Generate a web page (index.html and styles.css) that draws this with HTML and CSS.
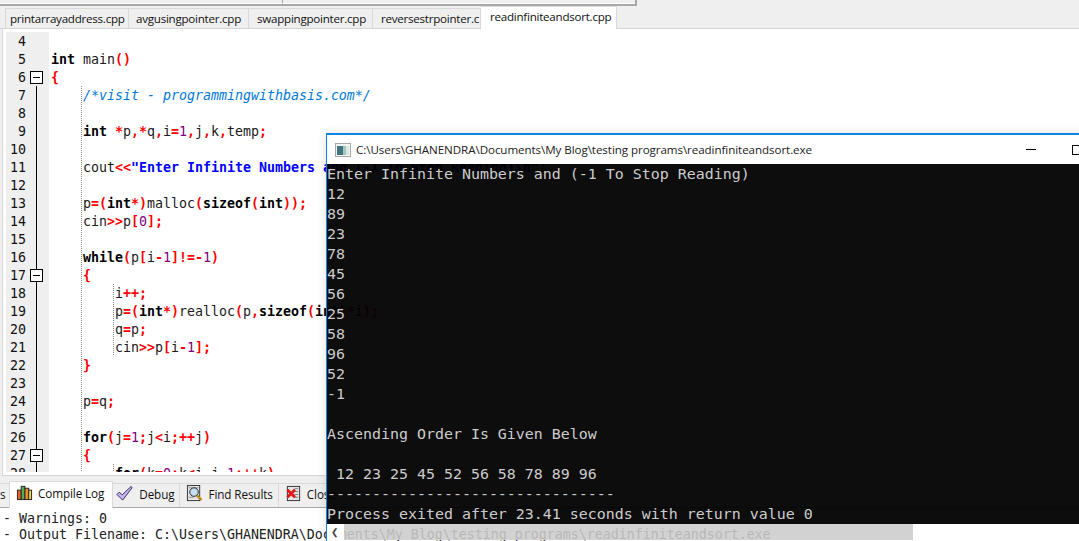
FILE: index.html
```html
<!DOCTYPE html>
<html lang="en">
<head>
<meta charset="utf-8">
<title>readinfiniteandsort</title>
<link rel="stylesheet" href="styles.css">
</head>
<body>
<div class="ide">
  <div class="menu-strip"><span class="menu-left"></span><span class="menu-right"></span></div>
  <div class="tabs">
    <span class="tab">printarrayaddress.cpp</span>
    <span class="tab">avgusingpointer.cpp</span>
    <span class="tab">swappingpointer.cpp</span>
    <span class="tab">reversestrpointer.c</span>
    <span class="tab tab-active">readinfiniteandsort.cpp</span>
  </div>
  <div class="editor">
    <div class="gutter">
      <div class="ln"><span class="num">4</span></div>
      <div class="ln"><span class="num">5</span></div>
      <div class="ln"><span class="num">6</span><i class="fold"></i></div>
      <div class="ln"><span class="num">7</span><i class="bar"></i></div>
      <div class="ln"><span class="num">8</span><i class="bar"></i></div>
      <div class="ln"><span class="num">9</span><i class="bar"></i></div>
      <div class="ln"><span class="num">10</span><i class="bar"></i></div>
      <div class="ln"><span class="num">11</span><i class="bar"></i></div>
      <div class="ln"><span class="num">12</span><i class="bar"></i></div>
      <div class="ln"><span class="num">13</span><i class="bar"></i></div>
      <div class="ln"><span class="num">14</span><i class="bar"></i></div>
      <div class="ln"><span class="num">15</span><i class="bar"></i></div>
      <div class="ln"><span class="num">16</span><i class="bar"></i></div>
      <div class="ln"><span class="num">17</span><i class="bar"></i><i class="fold"></i></div>
      <div class="ln"><span class="num">18</span><i class="bar"></i></div>
      <div class="ln"><span class="num">19</span><i class="bar"></i></div>
      <div class="ln"><span class="num">20</span><i class="bar"></i></div>
      <div class="ln"><span class="num">21</span><i class="bar"></i></div>
      <div class="ln"><span class="num">22</span><i class="bar"></i></div>
      <div class="ln"><span class="num">23</span><i class="bar"></i></div>
      <div class="ln"><span class="num">24</span><i class="bar"></i></div>
      <div class="ln"><span class="num">25</span><i class="bar"></i></div>
      <div class="ln"><span class="num">26</span><i class="bar"></i></div>
      <div class="ln"><span class="num">27</span><i class="bar"></i><i class="fold"></i></div>
      <div class="ln"><span class="num">28</span><i class="bar"></i></div>
    </div>
    <div class="code">
      <div class="cl"></div>
      <div class="cl"><b>int</b> main<u>()</u></div>
      <div class="cl"><u>{</u></div>
      <div class="cl in1"><em>/*visit - programmingwithbasis.com*/</em></div>
      <div class="cl in1"></div>
      <div class="cl in1"><b>int</b> <u>*</u>p<u>,*</u>q<u>,</u>i<u>=</u><s>1</s><u>,</u>j<u>,</u>k<u>,</u>temp<u>;</u></div>
      <div class="cl in1"></div>
      <div class="cl in1">cout<u>&lt;&lt;</u><strong>"Enter Infinite Numbers and (-1 To Stop Reading)\n"</strong><u>;</u></div>
      <div class="cl in1"></div>
      <div class="cl in1">p<u>=(</u><b>int</b><u>*)</u>malloc<u>(</u><b>sizeof</b><u>(</u><b>int</b><u>));</u></div>
      <div class="cl in1">cin<u>&gt;&gt;</u>p<u>[</u><s>0</s><u>];</u></div>
      <div class="cl in1"></div>
      <div class="cl in1"><b>while</b><u>(</u>p<u>[</u>i<u>-</u><s>1</s><u>]!=-</u><s>1</s><u>)</u></div>
      <div class="cl in1"><u>{</u></div>
      <div class="cl in1 in2">i<u>++;</u></div>
      <div class="cl in1 in2">p<u>=(</u><b>int</b><u>*)</u>realloc<u>(</u>p<u>,</u><b>sizeof</b><u>(</u><b>int</b><u>)*</u>i<u>);</u></div>
      <div class="cl in1 in2">q<u>=</u>p<u>;</u></div>
      <div class="cl in1 in2">cin<u>&gt;&gt;</u>p<u>[</u>i<u>-</u><s>1</s><u>];</u></div>
      <div class="cl in1"><u>}</u></div>
      <div class="cl in1"></div>
      <div class="cl in1">p<u>=</u>q<u>;</u></div>
      <div class="cl in1"></div>
      <div class="cl in1"><b>for</b><u>(</u>j<u>=</u><s>1</s><u>;</u>j<u>&lt;</u>i<u>;++</u>j<u>)</u></div>
      <div class="cl in1"><u>{</u></div>
      <div class="cl in1 in2"><b>for</b><u>(</u>k<u>=</u><s>0</s><u>;</u>k<u>&lt;</u>i<u>-</u>j<u>-</u><s>1</s><u>;++</u>k<u>)</u></div>
    </div>
  </div>
  <div class="dock-tabs">
    <span class="dock dock-cut">s</span>
    <span class="dock dock-active">
      <svg class="ico" viewBox="0 0 18 18"><rect x="1.5" y="6.5" width="4" height="10" fill="#e8602a" stroke="#222"/><rect x="5.5" y="2.5" width="4" height="14" fill="#4fae4f" stroke="#222"/><rect x="9.5" y="4.5" width="4" height="12" fill="#f08a2c" stroke="#222"/><rect x="13.5" y="6.5" width="3" height="10" fill="#f6dc4a" stroke="#222"/></svg>
      Compile Log</span>
    <span class="dock dock-debug">
      <svg class="ico" viewBox="0 0 18 18"><path d="M1 10l2.500-2.500 3 3L16 1.500l1 1.500L7 16z" fill="#c6b4ee" stroke="#33275f" stroke-linejoin="round"/></svg>
      Debug</span>
    <span class="dock">
      <svg class="ico" viewBox="0 0 18 18"><rect x="1.500" y="0.500" width="13" height="16" fill="#e4e4e4" stroke="#333"/><path d="M3 3h10M3 13h5" stroke="#888"/><circle cx="8.500" cy="7.500" r="4.500" fill="#c4def2" stroke="#222"/><path d="M11.500 11l5 5" stroke="#b98a1a" stroke-width="2.500"/></svg>
      Find Results</span>
    <span class="dock">
      <svg class="ico" viewBox="0 0 18 18"><rect x="2.500" y="1.500" width="13" height="15" fill="#e4e4e4" stroke="#333"/><path d="M10 4h4M10 7h4M10 10h4M10 13h4" stroke="#777"/><path d="M1.500 4l8 8M9.500 4l-8 8" stroke="#e01818" stroke-width="3" transform="translate(1 1)"/></svg>
      Close</span>
  </div>
  <div class="log">
    <div class="log-line">- Warnings: 0</div>
    <div class="log-line">- Output Filename: C:\Users\GHANENDRA\Documents\My Blog\testing programs\readinfiniteandsort.exe</div>
  </div>
</div>

<section class="console">
  <header class="titlebar">
    <svg class="app-ico" viewBox="0 0 16 14"><rect x="0.500" y="0.500" width="15" height="13" fill="#f4f4f4" stroke="#a8a8a8"/><rect x="2" y="3" width="6" height="9" fill="#3f7480"/><rect x="8" y="3" width="3" height="9" fill="#a7c8b6"/><rect x="11" y="3" width="3" height="9" fill="#dde5e8"/></svg>
    <span class="title-text">C:\Users\GHANENDRA\Documents\My Blog\testing programs\readinfiniteandsort.exe</span>
    <span class="winbtn winmin"></span>
    <span class="winbtn winmax"></span>
  </header>
  <pre class="output">Enter Infinite Numbers and (-1 To Stop Reading)
12
89
23
78
45
56
25
58
96
52
-1

Ascending Order Is Given Below

 12 23 25 45 52 56 58 78 89 96
--------------------------------
Process exited after 23.41 seconds with return value 0</pre>
  <div class="hscroll">
    <span class="arrow">&#10094;</span>
    <span class="thumb"></span>
  </div>
</section>
</body>
</html>
```
FILE: styles.css
```css
* { box-sizing: border-box; }
html, body { margin: 0; padding: 0; }
body {
  width: 1079px;
  height: 541px;
  overflow: hidden;
  position: relative;
  background: #efefef;
  font-family: "Open Sans", "Noto Sans", sans-serif;
}
.ide { display: flex; flex-direction: column; height: 541px; }
.menu-strip {
  height: 6px;
  flex: none;
  width: 637px;
  display: flex;
  border-bottom: 2px solid #a8a8a8;
  border-right: 2px solid #a8a8a8;
}
.menu-left { width: 283px; border-right: 1px solid #a8a8a8; border-bottom: 1px solid #fff; }
.menu-right { flex: 1; border-bottom: 1px solid #fff; }
.tabs {
  height: 23px;
  flex: none;
  display: flex;
  align-items: flex-end;
  padding-left: 5px;
  border-bottom: 1px solid #d4d4d4;
}
.tab {
  height: 20px;
  flex: none;
  overflow: hidden;
  display: flex;
  align-items: center;
  font-size: 11.600px;
  letter-spacing: -0.250px;
  color: #111;
  background: #efefef;
  border-right: 1px solid #d9d9d9;
  border-top: 1px solid #d9d9d9;
  white-space: nowrap;
}
.tab:nth-child(1) { width: 124px; padding-left: 4px; border-left: 1px solid #d9d9d9; }
.tab:nth-child(2) { width: 120px; padding-left: 7px; }
.tab:nth-child(3) { width: 124px; padding-left: 8px; }
.tab:nth-child(4) { width: 108px; padding-left: 8px; }
.tab:nth-child(5) {
  width: 136px;
  height: 23px;
  background: #fff;
  padding: 0 0 3px 9px;
  margin-bottom: -1px;
}
.editor {
  height: 447px;
  flex: none;
  background: #fff;
  margin-left: 2px;
  padding: 3px 0 3px 3px;
  border-left: 1px solid #d9d9d9;
  border-bottom: 1px solid #d4d4d4;
  display: flex;
  overflow: hidden;
}
.gutter { width: 43px; height: 100%; overflow: hidden; background: #efefef; flex: none; }
.ln { height: 18px; position: relative; }
.num {
  display: block;
  width: 20px;
  text-align: right;
  font: 13.290px/20px "DejaVu Sans Mono", monospace;
  color: #111;
}
.fold {
  position: absolute;
  z-index: 1;
  left: 24px;
  top: 3px;
  width: 13px;
  height: 13px;
  border: 1px solid #000;
  background: linear-gradient(#000, #000) center/7px 1px no-repeat #fff;
}
.bar {
  position: absolute;
  left: 30px;
  top: 0;
  bottom: 0;
  width: 1px;
  background: #000;
}
.code {
  margin-left: 2px;
  height: 100%;
  overflow: hidden;
  flex: 1;
  font: 13.290px/20px "DejaVu Sans Mono", monospace;
  color: #1a1a1a;
}
.cl { height: 18px; white-space: pre; }
.in1 { margin-left: 30px; padding-left: 2px; background: linear-gradient(#888 50%, transparent 50%) 0 0/1px 2px repeat-y; }
.in2 { padding-left: 34px; background: linear-gradient(#888 50%, transparent 50%) 0 0/1px 2px repeat-y, linear-gradient(#888 50%, transparent 50%) 32px 0/1px 2px repeat-y; }
.code b { font-weight: 700; color: #000; }
.code u { text-decoration: none; font-weight: 700; color: #f00; }
.code s { text-decoration: none; color: #800080; }
.code em { font-style: italic; color: #0078d7; }
.code strong { color: #0000ff; font-weight: 700; }
.dock-tabs {
  height: 32px;
  flex: none;
  display: flex;
  align-items: stretch;
  border-bottom: 1px solid #a8a8a8;
  font-size: 11.700px;
  letter-spacing: -0.100px;
  color: #111;
}
.dock {
  display: flex;
  align-items: center;
  gap: 5px;
  margin-top: 7px;
  padding: 0 5px 4px 6px;
  border-right: 1px solid #d9d9d9;
  border-top: 1px solid #d9d9d9;
  white-space: nowrap;
}
.dock-cut { width: 9px; padding: 0 0 4px; justify-content: flex-start; overflow: hidden; border-right: 0; }
.dock-active {
  background: #fff;
  margin-top: 5px;
  margin-bottom: -1px;
  padding: 0 8px 5px 6px;
  border-left: 1px solid #d9d9d9;
}
.dock-debug { padding-left: 3px; gap: 6px; }
.ico { width: 17px; height: 17px; flex: none; }
.log {
  flex: 1;
  min-height: 0;
  background: #fff;
  padding: 3px 0 0 3px;
  font: 13.290px/16px "DejaVu Sans Mono", monospace;
  color: #222;
  overflow: hidden;
}
.log-line { white-space: pre; }
.console {
  position: absolute;
  left: 326px;
  top: 133px;
  width: 800px;
  height: 408px;
  display: flex;
  flex-direction: column;
  border: 1px solid #0a84e0;
  border-width: 2px 0 0 1px;
  box-shadow: 0 0 10px rgba(0,0,0,.12);
}
.titlebar {
  height: 29px;
  flex: none;
  background: #fff;
  display: flex;
  align-items: center;
  padding-left: 8px;
  font-size: 11.600px;
  color: #222;
}
.app-ico { width: 16px; height: 14px; flex: none; }
.title-text { margin-left: 5px; letter-spacing: -0.070px; white-space: nowrap; width: 670px; }
.winbtn { display: block; flex: none; }
.winmin { width: 10px; height: 1px; background: #000; }
.winmax { width: 10px; height: 10px; border: 1px solid #000; margin-left: 36px; }
.output {
  flex: 1;
  min-height: 0;
  margin: 0;
  background: rgba(0,0,0,.95);
  color: #ccc;
  font: 14.940px/20px "DejaVu Sans Mono", monospace;
  padding: 0;
  overflow: hidden;
}
.hscroll {
  height: 17px;
  flex: none;
  display: flex;
  align-items: flex-start;
}
.arrow {
  width: 17px;
  height: 17px;
  flex: none;
  background: #fff;
  padding-left: 4px;
  font-size: 9px;
  color: #444;
  line-height: 16px;
}
.thumb { display: block; width: 569px; height: 16px; background: rgba(204,204,204,.88); }
```
